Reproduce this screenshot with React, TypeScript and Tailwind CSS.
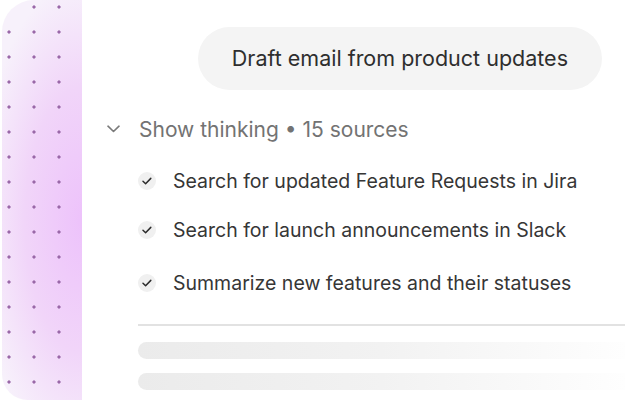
import React from "react";

function Check() {
  return (
    <div className="w-[18px] h-[18px] rounded-full bg-[#f0f0f0] flex items-center justify-center shrink-0">
      <svg width="18" height="18" viewBox="0 0 18 18" fill="none">
        <path d="M5 9.3 L7.6 11.7 L12.8 6.4" stroke="#2b2b2b" strokeWidth="1.5" strokeLinecap="round" strokeLinejoin="round" />
      </svg>
    </div>
  );
}

function Item({ text, mt }: { text: string; mt: string }) {
  return (
    <div className={`flex items-center h-[28px] ml-[56px] ${mt}`}>
      <Check />
      <span className="ml-[17px] pt-[2px] text-[19.5px] text-[#363636] whitespace-nowrap leading-none">{text}</span>
    </div>
  );
}

export default function App() {
  return (
    <div
      className="w-[625px] h-[401px] bg-white flex overflow-hidden"
      style={{ fontFamily: "Inter, 'Noto Sans', sans-serif" }}
    >
      <div className="ml-[2px] w-[80px] h-[400px] shrink-0 rounded-tl-[32px] rounded-bl-[26px] [background-image:radial-gradient(circle_at_7px_7px,#9a68a8_1.2px,transparent_2px),radial-gradient(ellipse_130%_60%_at_100%_55%,#edc2fb_0%,#f1d5f9_55%,#f7f1fb_100%)] [background-size:25px_25px,100%_100%]" />
      <div className="flex-1 flex flex-col min-w-0">
        <div className="self-end mr-[23px] mt-[27px] h-[63px] px-[34px] rounded-full bg-[#f4f4f4] flex items-center">
          <span className="pt-[1px] text-[21.5px] text-[#2e2e2e] whitespace-nowrap leading-none">Draft email from product updates</span>
        </div>
        <div className="flex items-center h-[28px] mt-[25px] ml-[25px]">
          <svg width="13" height="8" viewBox="0 0 13 8" fill="none">
            <path d="M1 1.2 L6.5 6.5 L12 1.2" stroke="#7a7a7a" strokeWidth="1.6" strokeLinecap="round" strokeLinejoin="round" />
          </svg>
          <span className="ml-[19px] text-[21px] text-[#737373] whitespace-nowrap leading-none">Show thinking • 15 sources</span>
        </div>
        <Item text="Search for updated Feature Requests in Jira" mt="mt-[24px]" />
        <Item text="Search for launch announcements in Slack" mt="mt-[21px]" />
        <Item text="Summarize new features and their statuses" mt="mt-[25px]" />
        <div className="ml-[56px] mt-[27px] h-[1.5px] bg-[#e2e2e2]" />
        <div className="ml-[56px] mt-[16px] h-[17px] rounded-l-full bg-[linear-gradient(to_right,#ebebeb_0%,#f2f2f2_50%,#fefefe_100%)]" />
        <div className="ml-[56px] mt-[14px] h-[17px] rounded-l-full bg-[linear-gradient(to_right,#ebebeb_0%,#f2f2f2_50%,#fefefe_100%)]" />
      </div>
    </div>
  );
}
